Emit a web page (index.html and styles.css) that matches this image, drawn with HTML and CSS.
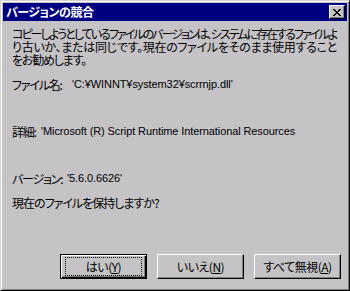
FILE: index.html
```html
<!DOCTYPE html>
<html lang="ja">
<head>
<meta charset="utf-8">
<title>バージョンの競合</title>
<link rel="stylesheet" href="styles.css">
</head>
<body>
<div class="window">
  <div class="titlebar">
    <span class="title">バージョンの競合</span>
    <span class="close">
      <svg width="8" height="7" viewBox="0 0 8 7" shape-rendering="crispEdges">
        <path d="M0 0h2v1h-2zM6 0h2v1h-2zM1 1h2v1h-2zM5 1h2v1h-2zM2 2h4v1h-4zM3 3h2v1h-2zM2 4h4v1h-4zM1 5h2v1h-2zM5 5h2v1h-2zM0 6h2v1h-2zM6 6h2v1h-2z" fill="#000"/>
      </svg>
    </span>
  </div>
  <div class="content">
    <p class="message">
      <span class="line full tight">コピーしようとしているファイルのバージョンは、システムに存在するファイルよ</span>
      <span class="line full">り古いか、または同じです。現在のファイルをそのまま使用すること</span>
      <span class="line">をお勧めします。</span>
    </p>
    <p class="field first"><span class="label w-name">ファイル名:</span><span class="value">'C:¥WINNT¥system32¥scrrnjp.dll'</span></p>
    <p class="field"><span class="label w-detail">詳細:</span><span class="value">'Microsoft (R) Script Runtime International Resources</span></p>
    <p class="field"><span class="label w-ver">バージョン:</span><span class="value">'5.6.0.6626'</span></p>
    <p class="question">現在のファイルを保持しますか?</p>
  </div>
  <div class="buttons">
    <button class="btn default"><span class="focus">はい(<u>Y</u>)</span></button>
    <button class="btn">いいえ(<u>N</u>)</button>
    <button class="btn">すべて無視(<u>A</u>)</button>
  </div>
</div>
</body>
</html>
```
FILE: styles.css
```css
* { box-sizing: border-box; }
html, body { margin: 0; padding: 0; }
body {
  width: 350px;
  height: 291px;
  overflow: hidden;
  background: #c5c3c6;
  font-family: "Noto Sans CJK JP", "Liberation Sans", sans-serif;
  font-size: 12px;
  color: #000;
}
.window {
  width: 350px;
  height: 291px;
  display: flex;
  flex-direction: column;
  background: #c5c3c6;
  border-top: 1px solid #d6d3d6;
  border-left: 1px solid #d6d3d6;
  border-right: 1px solid #000;
  border-bottom: 1px solid #000;
  box-shadow: inset 1px 1px 0 #fff, inset -1px -1px 0 #808080;
  padding: 2px;
}
.titlebar {
  height: 18px;
  flex: none;
  background: #000080;
  display: flex;
  align-items: center;
  justify-content: space-between;
  padding: 0 2px 0 3px;
}
.title {
  color: #fff;
  font-weight: bold;
  font-size: 12px;
  line-height: 18px;
  letter-spacing: -0.5px;
  font-feature-settings: "palt";
}
.close {
  width: 16px;
  height: 14px;
  background: #c5c3c6;
  border-top: 1px solid #fff;
  border-left: 1px solid #fff;
  border-right: 1px solid #000;
  border-bottom: 1px solid #000;
  box-shadow: inset -1px -1px 0 #808080;
  display: flex;
  align-items: center;
  justify-content: center;
  padding-right: 1px;
}
.close svg { display: block; }
.content {
  flex: 1;
  padding: 6px 0 0 9px;
}
p { margin: 0; }
.message {
  line-height: 13px;
  font-feature-settings: "palt";
}
.line {
  display: block;
  height: 13px;
  white-space: nowrap;
  letter-spacing: -1.2px;
}
.line.full {
  width: 324px;
  text-align: justify;
  text-align-last: justify;
}
.line.tight { letter-spacing: -2.1px; }
.field {
  height: 13px;
  line-height: 13px;
  margin-top: 34px;
  white-space: nowrap;
  display: flex;
  align-items: center;
  font-feature-settings: "palt";
}
.field.first { margin-top: 12px; }
.label {
  display: block;
  flex: none;
  letter-spacing: -1.2px;
}
.label.w-name { width: 60px; }
.label.w-detail { width: 29px; }
.label.w-ver { width: 55px; }
.value {
  display: block;
  line-height: 13px;
  font-family: "Liberation Sans", sans-serif;
  font-size: 11px;
  letter-spacing: -0.1px;
}
.question {
  margin-top: 11px;
  height: 13px;
  line-height: 13px;
  letter-spacing: -1px;
  font-feature-settings: "palt";
}
.buttons {
  flex: none;
  display: flex;
  justify-content: flex-end;
  gap: 10px;
  padding: 0 6px 9px 0;
}
.btn {
  width: 87px;
  height: 25px;
  padding: 0;
  margin: 0;
  font-family: "Noto Sans CJK JP", sans-serif;
  font-size: 12px;
  color: #000;
  background: #c5c3c6;
  border-top: 1px solid #fff;
  border-left: 1px solid #fff;
  border-right: 1px solid #000;
  border-bottom: 1px solid #000;
  box-shadow: inset -1px -1px 0 #808080;
  display: flex;
  align-items: center;
  justify-content: center;
  letter-spacing: -0.5px;
  font-feature-settings: "palt";
}
.btn.default {
  border: 1px solid #000;
  box-shadow: inset 1px 1px 0 #fff, inset -1px -1px 0 #000, inset -2px -2px 0 #808080;
}
.focus {
  display: flex;
  align-items: center;
  justify-content: center;
  width: 75px;
  height: 17px;
  outline: 1px dotted #000;
}
u { text-underline-offset: 1px; }
```
